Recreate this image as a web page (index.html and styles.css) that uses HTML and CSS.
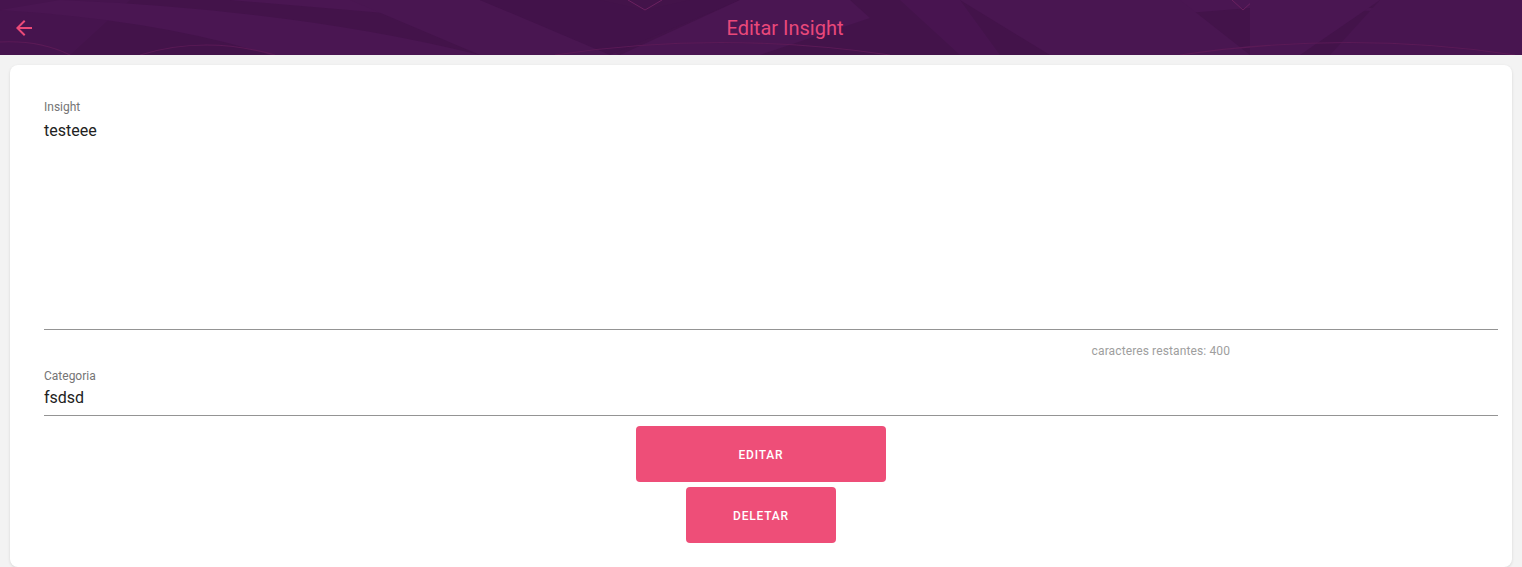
FILE: index.html
```html
<!DOCTYPE html>
<html lang="pt">
<head>
<meta charset="utf-8">
<title>Editar Insight</title>
<link rel="stylesheet" href="styles.css">
</head>
<body>
<header class="topbar">
  <svg class="pattern" viewBox="0 0 1522 55" preserveAspectRatio="none" aria-hidden="true">
    <path d="M0 0 L130 0 L70 55 L0 55 Z" fill="#4a1652" opacity="0.6"/>
    <path d="M60 0 Q300 10 480 55 L270 55 Q160 20 0 10 Z" fill="#4a1652"/>
    <path d="M155 0 L400 0 L420 16 L230 0 Z" fill="#4a1652"/>
    <path d="M350 0 L480 0 L620 55 L480 55 Z" fill="#491651"/>
    <path d="M480 0 L600 0 L645 10 L690 0 L740 0 L610 55 Z" fill="#42124a"/>
    <path d="M740 0 L850 0 L870 18 L760 55 L620 55 Z" fill="#4a1652"/>
    <path d="M628 0 L645 10 L662 0" fill="none" stroke="#6b2160" stroke-width="1"/>
    <path d="M1100 0 L1280 0 L1330 10 L1420 12 L1470 0 L1522 0 L1522 30 Q1400 0 1250 8 L1100 20 Z" fill="#4a1652"/>
    <path d="M960 0 L1180 0 L1250 55 L1050 55 Z" fill="#491651"/>
    <path d="M900 0 L960 0 L1000 55 L960 55 Z" fill="#4a1652" opacity="0.7"/>
    <path d="M1232 0 L1243 10 L1254 0" fill="none" stroke="#6b2160" stroke-width="1"/>
    <path d="M1250 0 L1380 0 L1300 55 L1250 55 Z" fill="#4a1652"/>
    <path d="M1380 0 L1522 0 L1522 55 L1330 55 Z" fill="#481550"/>
    <path d="M140 55 Q205 35 275 55" fill="none" stroke="#5a1a56" stroke-width="1.2"/>
    <path d="M0 42 Q40 40 70 55" fill="none" stroke="#5a1a56" stroke-width="1.2"/>
    <path d="M555 55 Q720 30 890 55" fill="none" stroke="#5a1a56" stroke-width="1.2"/>
    <path d="M1180 55 Q1350 30 1515 55" fill="none" stroke="#5a1a56" stroke-width="1.2"/>
  </svg>
  <button class="back" aria-label="Voltar">
    <svg viewBox="0 0 24 24" width="24" height="24"><path d="M20 11H7.83l5.59-5.59L12 4l-8 8 8 8 1.41-1.41L7.83 13H20v-2z" fill="#ec4a78"/></svg>
  </button>
  <h1 class="title">Editar Insight</h1>
</header>

<main class="card">
  <div class="field insight">
    <label class="label">Insight</label>
    <div class="value textarea">testeee</div>
  </div>
  <div class="counter-row"><span class="counter">caracteres restantes: 400</span></div>
  <div class="field category">
    <label class="label">Categoria</label>
    <div class="value">fsdsd</div>
  </div>
  <div class="actions">
    <button class="btn btn-edit">EDITAR</button>
    <button class="btn btn-delete">DELETAR</button>
  </div>
</main>
</body>
</html>
```
FILE: styles.css
```css
* { box-sizing: border-box; }
html, body { margin: 0; padding: 0; }
body {
  background: #f3f3f3;
  font-family: Roboto, "Liberation Sans", Arial, sans-serif;
  height: 567px;
  overflow: hidden;
}
.topbar {
  position: relative;
  height: 55px;
  background: #43134a;
  display: flex;
  align-items: center;
  justify-content: center;
}
.pattern {
  position: absolute;
  inset: 0;
  width: 100%;
  height: 100%;
}
.back {
  position: absolute;
  left: 12px;
  top: 16px;
  width: 24px;
  height: 24px;
  padding: 0;
  border: 0;
  background: none;
  display: flex;
}
.title {
  position: relative;
  margin: 2px 0 0 48px;
  font-size: 20px;
  font-weight: 400;
  color: #e9487a;
  line-height: 53px;
}
.card {
  margin: 10px 10px 0 10px;
  height: 502px;
  background: #fff;
  border-radius: 8px;
  box-shadow: 0 1px 3px rgba(0,0,0,0.12);
  padding: 34px 14px 0 34px;
}
.field {
  border-bottom: 1px solid #949494;
}
.label {
  display: block;
  font-size: 12px;
  color: #757575;
  line-height: 16px;
}
.value {
  font-size: 16px;
  color: #212121;
  line-height: 22px;
  margin-top: 5px;
}
.insight { height: 231px; }
.counter-row {
  display: flex;
  justify-content: flex-end;
  padding-right: 268px;
  height: 36px;
  padding-top: 14px;
}
.counter {
  font-size: 12px;
  letter-spacing: 0.12px;
  color: #9e9e9e;
  line-height: 14px;
}
.category {
  padding-top: 2px;
  height: 50px;
}
.category .value { margin-top: 3px; }
.actions {
  display: flex;
  flex-direction: column;
  align-items: center;
  gap: 5px;
  padding-top: 10px;
  margin-left: -20px;
}
.btn {
  height: 56px;
  border: 0;
  border-radius: 4px;
  background: #ee4e78;
  color: #fff;
  font-family: Roboto, "Liberation Sans", Arial, sans-serif;
  font-size: 12px;
  font-weight: 500;
  letter-spacing: 0.8px;
  padding: 2px 0 0 0;
}
.btn-edit { width: 250px; }
.btn-delete { width: 150px; }
```
